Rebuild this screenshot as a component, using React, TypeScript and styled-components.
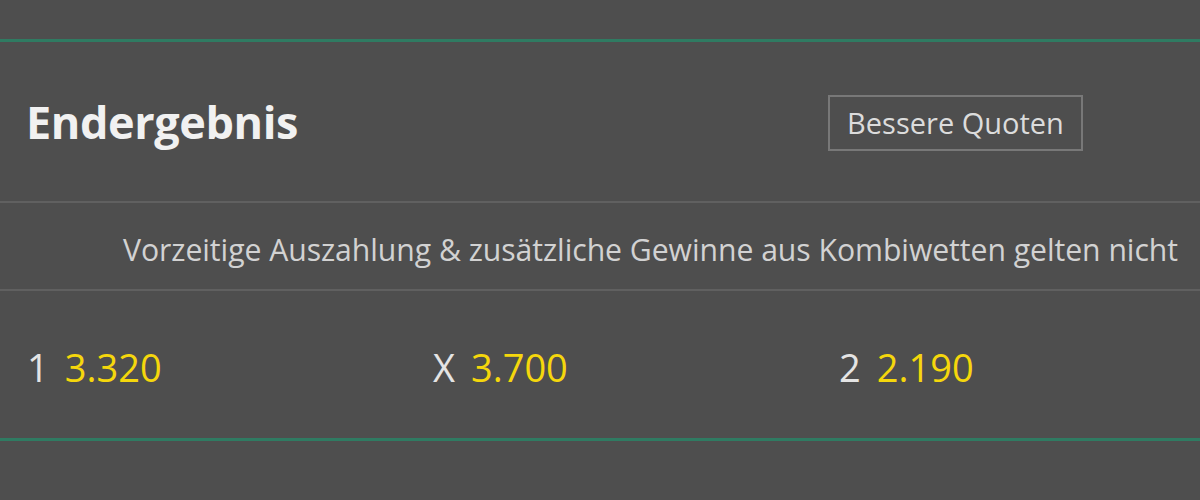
import React from 'react';
import styled, { createGlobalStyle } from 'styled-components';

const GlobalStyle = createGlobalStyle`
    html, body {
        margin: 0;
        padding: 0;
        background: #4e4e4e;
    }
    body {
        font-family: "Open Sans", "Noto Sans", "Liberation Sans", sans-serif;
        -webkit-font-smoothing: antialiased;
    }
`;

const Page = styled.div`
    width: 1200px;
    height: 500px;
    overflow: hidden;
    background: #4e4e4e;
    padding-top: 39px;
    box-sizing: border-box;
`;

const Market = styled.section`
    border-top: 3px solid #2f7b62;
    border-bottom: 3px solid #2f7b62;
`;

const Header = styled.div`
    height: 161px;
    display: flex;
    align-items: center;
    justify-content: space-between;
    padding: 0 117px 0 26px;
    border-bottom: 2px solid #606060;
    box-sizing: border-box;
`;

const Title = styled.h2`
    margin: 0;
    font-size: 45px;
    font-weight: 700;
    color: #f1f1f1;
    letter-spacing: -0.4px;
`;

const OddsButton = styled.button`
    height: 56px;
    width: 255px;
    padding: 0;
    margin-top: 2px;
    background: transparent;
    border: 2px solid #787878;
    color: #dcdcdc;
    font-family: inherit;
    font-size: 29px;
    cursor: pointer;
`;

const Notice = styled.div`
    height: 88px;
    display: flex;
    align-items: center;
    justify-content: flex-end;
    padding: 6px 22px 0 0;
    box-sizing: border-box;
    border-bottom: 2px solid #606060;
    font-size: 30.2px;
    color: #d2d2d2;
    letter-spacing: -0.05px;
`;

const OddsRow = styled.div`
    height: 147px;
    display: grid;
    grid-template-columns: repeat(3, 406px);
    align-items: center;
    padding: 4px 0 0 27px;
    box-sizing: border-box;
`;

const Outcome = styled.div`
    display: flex;
    align-items: baseline;
    gap: 16px;
    font-size: 38px;
`;

const Label = styled.span`
    color: #e4e4e4;
`;

const Price = styled.span`
    color: #f5d70c;
`;

const outcomes = [
    { label: '1', price: '3.320' },
    { label: 'X', price: '3.700' },
    { label: '2', price: '2.190' },
];

export default function App() {
    return (
        <>
            <GlobalStyle />
            <Page>
                <Market>
                    <Header>
                        <Title>Endergebnis</Title>
                        <OddsButton type="button">Bessere Quoten</OddsButton>
                    </Header>
                    <Notice>Vorzeitige Auszahlung &amp; zusätzliche Gewinne aus Kombiwetten gelten nicht</Notice>
                    <OddsRow>
                        {outcomes.map((o) => (
                            <Outcome key={o.label}>
                                <Label>{o.label}</Label>
                                <Price>{o.price}</Price>
                            </Outcome>
                        ))}
                    </OddsRow>
                </Market>
            </Page>
        </>
    );
}
